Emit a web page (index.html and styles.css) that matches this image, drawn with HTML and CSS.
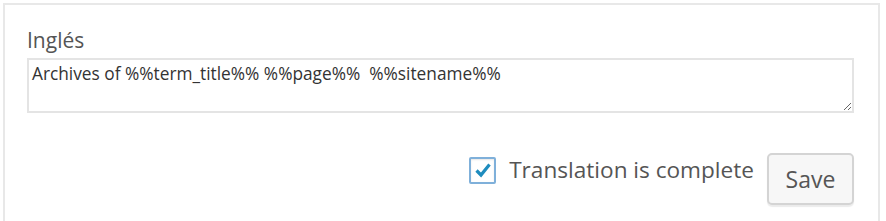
FILE: index.html
```html
<!DOCTYPE html>
<html>
<head>
    <meta charset="UTF-8">
    <title>Translation</title>
    <link rel="stylesheet" href="styles.css">
</head>
<body>
    <div class="translation-box">
        <label class="field-label" for="translation">Inglés</label>
        <textarea id="translation" class="field-input">Archives of %%term_title%% %%page%%  %%sitename%%</textarea>
        <div class="actions">
            <label class="complete">
                <span class="check">
                    <svg viewBox="0 0 20 20" width="20" height="20">
                        <path d="M3.5 10.5 L8 15 L16.5 4.5" fill="none" stroke="#1e8cbe" stroke-width="3.2" stroke-linejoin="miter"/>
                    </svg>
                </span>
                Translation is complete
            </label>
            <button type="button" class="btn">Save</button>
        </div>
    </div>
</body>
</html>
```

FILE: styles.css
```css
body {
    font-family: "Open Sans", sans-serif;
    background: white;
    margin: 0;
    padding: 3px 0 0 3px;
    color: #555;
    overflow: hidden;
}
.translation-box {
    box-sizing: border-box;
    width: 877px;
    height: 218px;
    border: 2px solid #e8e8e8;
    border-bottom: none;
    padding: 21px 24px 0 22px;
}
.field-label {
    display: block;
    font-size: 21px;
    line-height: 29px;
    color: #555;
}
.field-input {
    display: block;
    box-sizing: border-box;
    width: 827px;
    height: 55px;
    margin: 3px 0 0 0;
    padding: 3px 3px;
    border: 2px solid #e4e4e4;
    font-family: "Open Sans", sans-serif;
    font-size: 17.3px;
    line-height: 22px;
    color: #333;
    resize: vertical;
}
.actions {
    display: flex;
    justify-content: flex-end;
    align-items: flex-start;
    gap: 13px;
    margin-top: 40px;
    width: 827px;
}
.complete {
    display: flex;
    align-items: center;
    gap: 13px;
    font-size: 22.6px;
    line-height: 30px;
    color: #555;
    margin-top: 2px;
}
.check {
    box-sizing: border-box;
    width: 27px;
    height: 27px;
    border: 2px solid #7fb0da;
    border-radius: 2px;
    display: flex;
    align-items: center;
    justify-content: center;
    box-shadow: inset 0 1px 2px rgba(0,0,0,0.1);
}
.btn {
    width: 87px;
    height: 52px;
    background: #f7f7f7;
    border: 2px solid #d4d4d4;
    border-radius: 5px;
    box-shadow: 0 2px 1px rgba(0,0,0,0.08);
    font-family: "Open Sans", sans-serif;
    font-size: 23px;
    color: #555;
    padding: 0;
}
```
